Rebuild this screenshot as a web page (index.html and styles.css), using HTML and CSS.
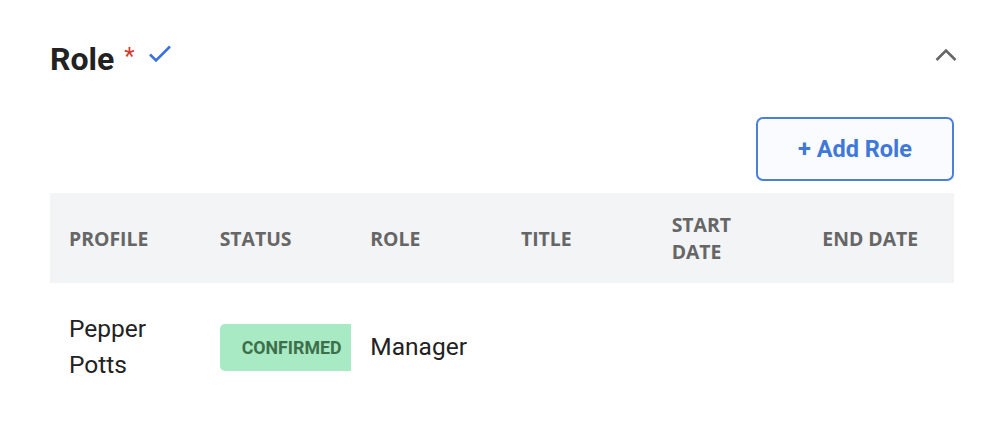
FILE: index.html
```html
<!DOCTYPE html>
<html>
  <head>
    <title>Role</title>
    <link rel="stylesheet" href="styles.css">
    <meta name="viewport" content="width=device-width, initial-scale=1" />
  </head>
  <body>
    <div class="panel">
      <div class="head">
        <h2 class="heading">Role <span class="req">*</span>
          <svg class="check" width="24" height="20" viewBox="0 0 24 20"><path d="M2 10.5 L8 16.5 L22 2.5" fill="none" stroke="#3a73e0" stroke-width="2.6"/></svg>
        </h2>
        <svg class="chevron" width="22" height="14" viewBox="0 0 22 14"><path d="M1.5 12 L11 2.5 L20.5 12" fill="none" stroke="#666" stroke-width="2.6"/></svg>
      </div>
      <div class="actions">
        <button class="add">+ Add Role</button>
      </div>
      <table class="table">
        <tr class="thead">
          <th>PROFILE</th>
          <th>STATUS</th>
          <th>ROLE</th>
          <th>TITLE</th>
          <th>START DATE</th>
          <th>END DATE</th>
        </tr>
        <tr class="row">
          <td>Pepper Potts</td>
          <td class="clip"><div class="badge">CONFIRMED</div></td>
          <td>Manager</td>
          <td></td>
          <td></td>
          <td></td>
        </tr>
      </table>
    </div>
  </body>
</html>
```

FILE: styles.css
```css
body {margin: 0; background: #fff; font-family: Roboto, "Liberation Sans", sans-serif; color: #222;}
.panel {width: 904px; padding: 34px 0 0 50px;}
.head {display: flex; justify-content: space-between; align-items: center; height: 50px;}
.heading {margin: 0; font-size: 32px; font-weight: 700; color: #222; display: flex; align-items: center;}
.req {color: #d0392b; font-size: 24px; font-weight: 400; margin-left: 10px; margin-top: -6px;}
.check {margin-left: 13px; margin-top: -10px;}
.chevron {margin-right: -3px; margin-top: -8px;}
.actions {display: flex; justify-content: flex-end; margin-top: 33px;}
.add {width: 198px; height: 64px; border: 2px solid #4a7fdc; border-radius: 7px; background: #f9fbff; color: #3f78d9; font-family: Roboto, sans-serif; font-size: 23.5px; font-weight: 700;}
.table {width: 904px; border-collapse: collapse; table-layout: fixed; margin-top: 12px;}
.thead {background: #f3f4f6; height: 90px;}
.thead th {text-align: left; padding: 0 20px 0 19px; font-family: "Open Sans", sans-serif; font-size: 19.4px; font-weight: 700; color: #666; line-height: 27px;}
.row td {padding: 0 0 0 19px; height: 128px; font-size: 24.5px; line-height: 36px; color: #222; vertical-align: middle;}
.clip {overflow: hidden;}
.badge {width: 170px; height: 47px; line-height: 47px; padding-left: 22px; background: #a8eac3; color: #3d6f4b; border-radius: 5px; font-size: 17.8px; font-weight: 700;}
```
